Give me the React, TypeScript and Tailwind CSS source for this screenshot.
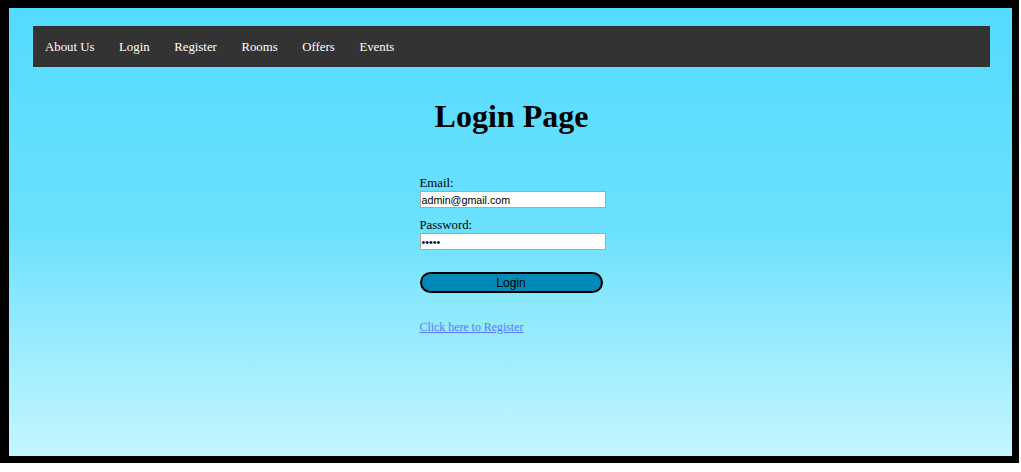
import { useState } from 'react';

const navItems = ['About Us', 'Login', 'Register', 'Rooms', 'Offers', 'Events'];

const App = () => {
    const [email, setEmail] = useState('admin@gmail.com');
    const [password, setPassword] = useState('admin');

    return (
        <div className="w-[1019px] h-[463px] bg-black pt-[8px] pl-[9px]">
            <div className="w-[1003px] h-[448px] bg-gradient-to-b from-[#53dbff] via-[#6be1fd] to-[#c3f6ff] pt-[18px] pl-[24px] pr-[22px] font-['Liberation_Serif',serif]">
                <nav className="h-[41px] bg-[#333333] flex items-center pl-[12px] gap-[24.6px] text-white text-[12.8px]">
                    {navItems.map((item) => (
                        <a key={item} href="#" className="leading-none pt-[1px]">{item}</a>
                    ))}
                </nav>

                <h1 className="mt-[31px] text-center text-[32px] font-bold leading-[37px] text-black">Login Page</h1>

                <div className="flex justify-center">
                    <form className="w-[186px] mt-[41px] pl-[1px]" onSubmit={(ev) => ev.preventDefault()}>
                        <label htmlFor="email" className="block text-[12.8px] leading-[15px] text-black">Email:</label>
                        <input
                            id="email"
                            type="email"
                            className="block w-[186px] h-[17px] bg-white border border-[#a9a9a9] px-[1px] text-[10.7px] font-['Liberation_Sans',sans-serif] text-black outline-none"
                            value={email}
                            onChange={(ev) => setEmail(ev.currentTarget.value)}
                        />
                        <label htmlFor="password" className="block mt-[10px] text-[12.8px] leading-[15px] text-black">Password:</label>
                        <input
                            id="password"
                            type="password"
                            className="block w-[186px] h-[17px] bg-white border border-[#a9a9a9] px-[1px] text-[10.7px] font-['Liberation_Sans',sans-serif] text-black outline-none"
                            value={password}
                            onChange={(ev) => setPassword(ev.currentTarget.value)}
                        />
                        <button
                            type="submit"
                            className="block mt-[22px] w-[183px] h-[21px] rounded-full border-2 border-black bg-[#0089b6] text-[12px] leading-none font-['Liberation_Sans',sans-serif] text-black"
                        >
                            Login
                        </button>
                        <a href="#" className="block mt-[27px] text-[12px] tracking-[-0.05px] leading-[15px] text-[#5a78ff] underline">Click here to Register</a>
                    </form>
                </div>
            </div>
        </div>
    );
}

export default App;
